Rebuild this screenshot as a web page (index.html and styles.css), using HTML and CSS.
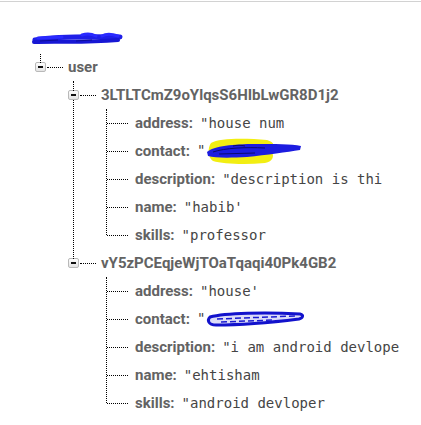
FILE: index.html
```html
<!DOCTYPE html>
<html lang="en">
<head>
  <meta charset="UTF-8" />
  <meta name="viewport" content="width=device-width, initial-scale=1.0" />
  <title>Database</title>
  <link rel="stylesheet" href="styles.css">
</head>
<body>
  <div class="topbar"></div>

  <div class="tree">
    <div class="root-row">
      <!-- scribbled-out project name -->
      <svg class="scribble" width="92" height="16" viewBox="0 0 92 16">
        <path d="M3 9 C20 6 40 5 88 6" stroke="#1f1fe8" stroke-width="5" fill="none" stroke-linecap="round"/>
        <path d="M2 11 C25 10 50 12 86 9" stroke="#1717d4" stroke-width="4" fill="none" stroke-linecap="round"/>
        <path d="M6 7 L30 6 M50 4 C56 2 60 3 64 5 M70 5 C75 2 80 3 86 5" stroke="#2a2aff" stroke-width="3" fill="none" stroke-linecap="round"/>
        <path d="M8 10 L26 9 M44 10 L60 9" stroke="#0c0c9a" stroke-width="1" fill="none"/>
      </svg>
    </div>

    <div class="node top">
      <div class="row"><span class="toggle"></span><span class="hline"></span><span class="key">user</span></div>
      <div class="children">

        <div class="node sub">
          <div class="row"><span class="toggle"></span><span class="hline"></span><span class="key">3LTLTCmZ9oYlqsS6HIbLwGR8D1j2</span></div>
          <div class="leaves">
            <div class="leaf"><span class="key">address:</span><span class="val">"house num</span></div>
            <div class="leaf"><span class="key">contact:</span><span class="val">"<svg class="mark" width="98" height="28" viewBox="0 0 98 28">
              <path d="M6 6 C14 1 40 1 62 3 C70 5 70 10 66 14 C70 18 68 25 60 26 C40 28 18 27 8 24 C2 20 3 10 6 6 Z" fill="#f2ee12"/>
              <path d="M2 15 C8 9 30 7 50 7 C70 7 86 7 96 9 L95 13 C82 15 62 18 42 20 C24 21 10 21 3 19 Z" fill="#1c1ce0"/>
              <path d="M8 15 C20 11 40 10 60 11 M14 17 L50 16 M28 9 C32 8 36 8 40 9" stroke="#0a0a70" stroke-width="1" fill="none"/>
            </svg></span></div>
            <div class="leaf"><span class="key">description:</span><span class="val">"description is thi</span></div>
            <div class="leaf"><span class="key">name:</span><span class="val">"habib'</span></div>
            <div class="leaf"><span class="key">skills:</span><span class="val">"professor</span></div>
          </div>
        </div>

        <div class="node sub">
          <div class="row"><span class="toggle"></span><span class="hline"></span><span class="key">vY5zPCEqjeWjTOaTqaqi40Pk4GB2</span></div>
          <div class="leaves">
            <div class="leaf"><span class="key">address:</span><span class="val">"house'</span></div>
            <div class="leaf"><span class="key">contact:</span><span class="val">"<svg class="mark" width="100" height="20" viewBox="0 0 100 20">
              <path d="M5 8 C20 4 60 3 95 5 C99 6 98 9 94 10 C70 13 40 16 11 16 C3 16 2 11 5 8 Z" fill="#dcdcf8" stroke="#1212cc" stroke-width="3"/>
              <path d="M12 10 L90 7 M16 13 L70 11" stroke="#1a1ad0" stroke-width="1.5" stroke-dasharray="6 3" fill="none"/>
            </svg></span></div>
            <div class="leaf"><span class="key">description:</span><span class="val">"i am android devlope</span></div>
            <div class="leaf"><span class="key">name:</span><span class="val">"ehtisham</span></div>
            <div class="leaf"><span class="key">skills:</span><span class="val">"android devloper</span></div>
          </div>
        </div>

      </div>
    </div>
  </div>
</body>
</html>
```

FILE: styles.css
```css
body { margin: 0; background: #fff; font-family: Roboto, "Liberation Sans", sans-serif; white-space: nowrap; overflow: hidden; }
.topbar { height: 1px; margin-top: 1px; background: #d2d2d2; }

.tree { padding: 23px 0 0 32px; }
.root-row { height: 28px; display: flex; align-items: center; }

.node { position: relative; }
.node.top { margin-left: 3px; }
.children { margin-left: 33px; }

/* line running down to the next sibling */
.node.sub:not(:last-child)::before {
  content: ""; position: absolute; left: 5px; top: 0; bottom: 0;
  border-left: 1px dotted #000;
}

.row { height: 28px; display: flex; align-items: center; }
.toggle {
  position: relative; width: 11px; height: 10px; box-sizing: border-box;
  border: 1px solid #b9b9b9; border-radius: 2px;
  background: linear-gradient(#fdfdfd, #e4e4e4);
}
.toggle::before {
  content: ""; position: absolute; left: 4px; bottom: 100%; height: 9px;
  border-left: 1px dotted #000;
}
.toggle::after {
  content: ""; position: absolute; left: 2px; top: 3px; width: 5px; height: 2px; background: #111;
}
.hline { width: 16px; margin-left: 1px; border-top: 1px dotted #000; }
.key { margin-left: 5px; font-size: 15px; font-weight: bold; color: #636363; }

.leaves { position: relative; margin-left: 38px; }
.leaves::before {
  content: ""; position: absolute; left: 0; top: 0; bottom: 14px;
  border-left: 1px dotted #000;
}
.leaf { height: 28px; display: flex; align-items: center; }
.leaf::before { content: ""; width: 21px; margin-left: 1px; border-top: 1px dotted #000; }
.leaf .key { margin-left: 7px; }
.val { margin-left: 7px; font-family: "DejaVu Sans Mono", "Liberation Mono", monospace; font-size: 14px; color: #454545; }
.mark { vertical-align: middle; }
```
